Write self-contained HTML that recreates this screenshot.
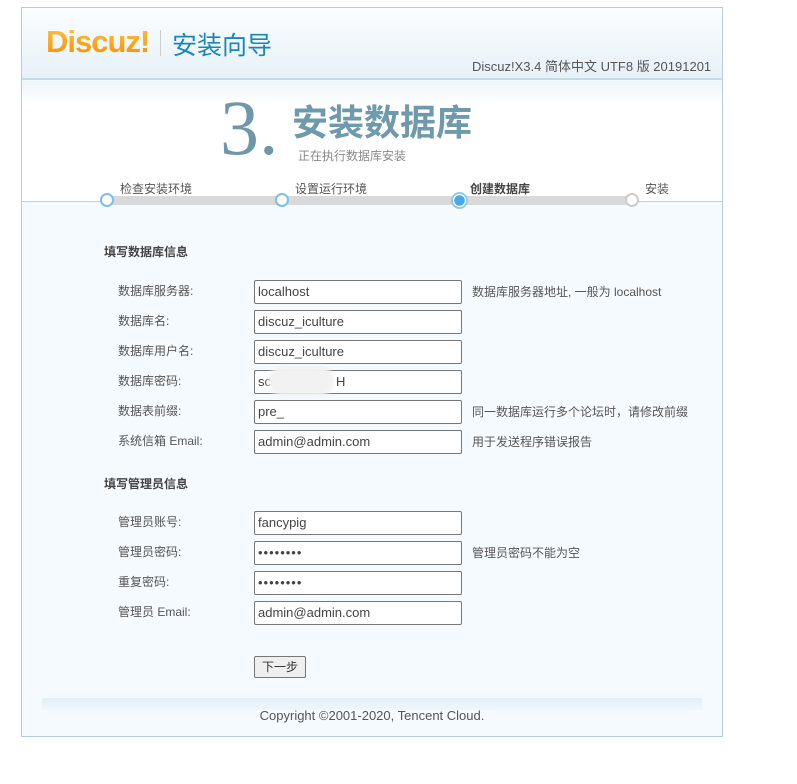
<!DOCTYPE html>
<html><head><meta charset="utf-8"><style>
*{margin:0;padding:0;box-sizing:border-box}
body{width:797px;height:784px;background:#fff;font-family:"Liberation Sans","Noto Sans CJK SC",sans-serif;font-size:12px;color:#555;position:relative;overflow:hidden}
.a{position:absolute;white-space:nowrap}
#box{position:absolute;left:21px;top:7px;width:702px;height:730px;border:1px solid #b5cfd9;background:#f5fafe}
#hd{position:absolute;left:0;top:0;width:700px;height:70px;background:linear-gradient(#fbfdfe,#e6f1f8)}
#hl{position:absolute;left:0;top:70px;width:700px;height:2px;background:#c4dbe5}
#st{position:absolute;left:0;top:73px;width:700px;height:121px;background:linear-gradient(#eef5fa,#fff 20%,#fff)}
#sl{position:absolute;left:0;top:193px;width:700px;height:1px;background:#b8d3de}
.inp{position:absolute;left:254px;width:208px;height:24px;border:1px solid #777;border-radius:2px;background:#fff;font-size:13px;color:#444;padding:3px 3px;line-height:16px}
.lb{position:absolute;left:118px;font-size:12px;color:#555;margin-top:-2px}
.tip{position:absolute;left:472px;font-size:12px;color:#555;margin-top:-1px}
.h{position:absolute;left:104px;font-weight:bold;font-size:12px;color:#444}
.c{position:absolute;width:14px;height:14px;border-radius:50%;border:2px solid #7cc0e8;background:#fff;top:193px}
</style></head><body>
<div id="box"><div id="hd"></div><div id="hl"></div><div id="st"></div><div id="sl"></div>
<div style="position:absolute;left:20px;top:690px;width:660px;height:12px;background:linear-gradient(#e5eff8,#f0f6fb)"></div>
</div>
<div class="a" style="left:46px;top:24px;font-size:31px;font-weight:bold;letter-spacing:-1px;background:linear-gradient(#ffc640,#f78a00);-webkit-background-clip:text;color:transparent">Discuz!</div>
<div class="a" style="left:160px;top:30px;width:1px;height:26px;background:#ccc"></div>
<div class="a" style="left:172px;top:26px;font-size:25px;color:#1a86b8">安装向导</div>
<div class="a" style="left:472px;top:56px;font-size:13px;color:#555">Discuz!X3.4 简体中文 UTF8 版 20191201</div>
<div class="a" style="left:220px;top:88px;font-size:78px;font-family:'Liberation Serif',serif;color:#6e98a9;line-height:80px">3.</div>
<div class="a" style="left:292px;top:101px;font-size:36px;font-weight:bold;color:#6f9aab;line-height:44px">安装数据库</div>
<div class="a" style="left:298px;top:147px;font-size:12px;color:#888">正在执行数据库安装</div>
<div class="a" style="left:107px;top:196px;width:525px;height:9px;background:#d9d9d9"></div>
<div class="c" style="left:100px"></div>
<div class="c" style="left:275px"></div>
<div class="c" style="left:451px;width:17px;height:17px;top:192px;border-color:#8fcaee;background:radial-gradient(#4aa8e4 55%,#fff 60%)"></div>
<div class="c" style="left:625px;border-color:#ccc"></div>
<div class="a" style="left:120px;top:180px">检查安装环境</div>
<div class="a" style="left:295px;top:180px">设置运行环境</div>
<div class="a" style="left:470px;top:180px;font-weight:bold;color:#444">创建数据库</div>
<div class="a" style="left:645px;top:180px">安装</div>

<div class="h" style="top:243px">填写数据库信息</div>
<div class="lb" style="top:284px">数据库服务器:</div><div class="inp" style="top:280px">localhost</div><div class="tip" style="top:284px">数据库服务器地址, 一般为 localhost</div>
<div class="lb" style="top:314px">数据库名:</div><div class="inp" style="top:310px">discuz_iculture</div>
<div class="lb" style="top:344px">数据库用户名:</div><div class="inp" style="top:340px">discuz_iculture</div>
<div class="lb" style="top:374px">数据库密码:</div><div class="inp" style="top:370px">sc&nbsp;&nbsp;&nbsp;&nbsp;&nbsp;&nbsp;&nbsp;&nbsp;&nbsp;&nbsp;&nbsp;&nbsp;&nbsp;&nbsp;&nbsp;&nbsp;&nbsp;&nbsp;H</div>
<div class="a" style="left:268px;top:366px;width:66px;height:30px;border-radius:15px;background:#f2f2f2;filter:blur(2px)"></div>
<div class="lb" style="top:404px">数据表前缀:</div><div class="inp" style="top:400px">pre_</div><div class="tip" style="top:404px">同一数据库运行多个论坛时，请修改前缀</div>
<div class="lb" style="top:434px">系统信箱 Email:</div><div class="inp" style="top:430px">admin@admin.com</div><div class="tip" style="top:434px">用于发送程序错误报告</div>

<div class="h" style="top:475px">填写管理员信息</div>
<div class="lb" style="top:515px">管理员账号:</div><div class="inp" style="top:511px">fancypig</div>
<div class="lb" style="top:545px">管理员密码:</div><div class="inp" style="top:541px;letter-spacing:1px">••••••••</div><div class="tip" style="top:545px">管理员密码不能为空</div>
<div class="lb" style="top:575px">重复密码:</div><div class="inp" style="top:571px;letter-spacing:1px">••••••••</div>
<div class="lb" style="top:605px">管理员 Email:</div><div class="inp" style="top:601px">admin@admin.com</div>

<div class="a" style="left:254px;top:656px;width:52px;height:22px;border:1px solid #777;border-radius:2px;background:#efefef;font-size:12px;color:#333;text-align:center;line-height:20px">下一步</div>
<div class="a" style="left:0;width:744px;text-align:center;top:708px;font-size:13px;color:#555">Copyright ©2001-2020, Tencent Cloud.</div>
</body></html>
